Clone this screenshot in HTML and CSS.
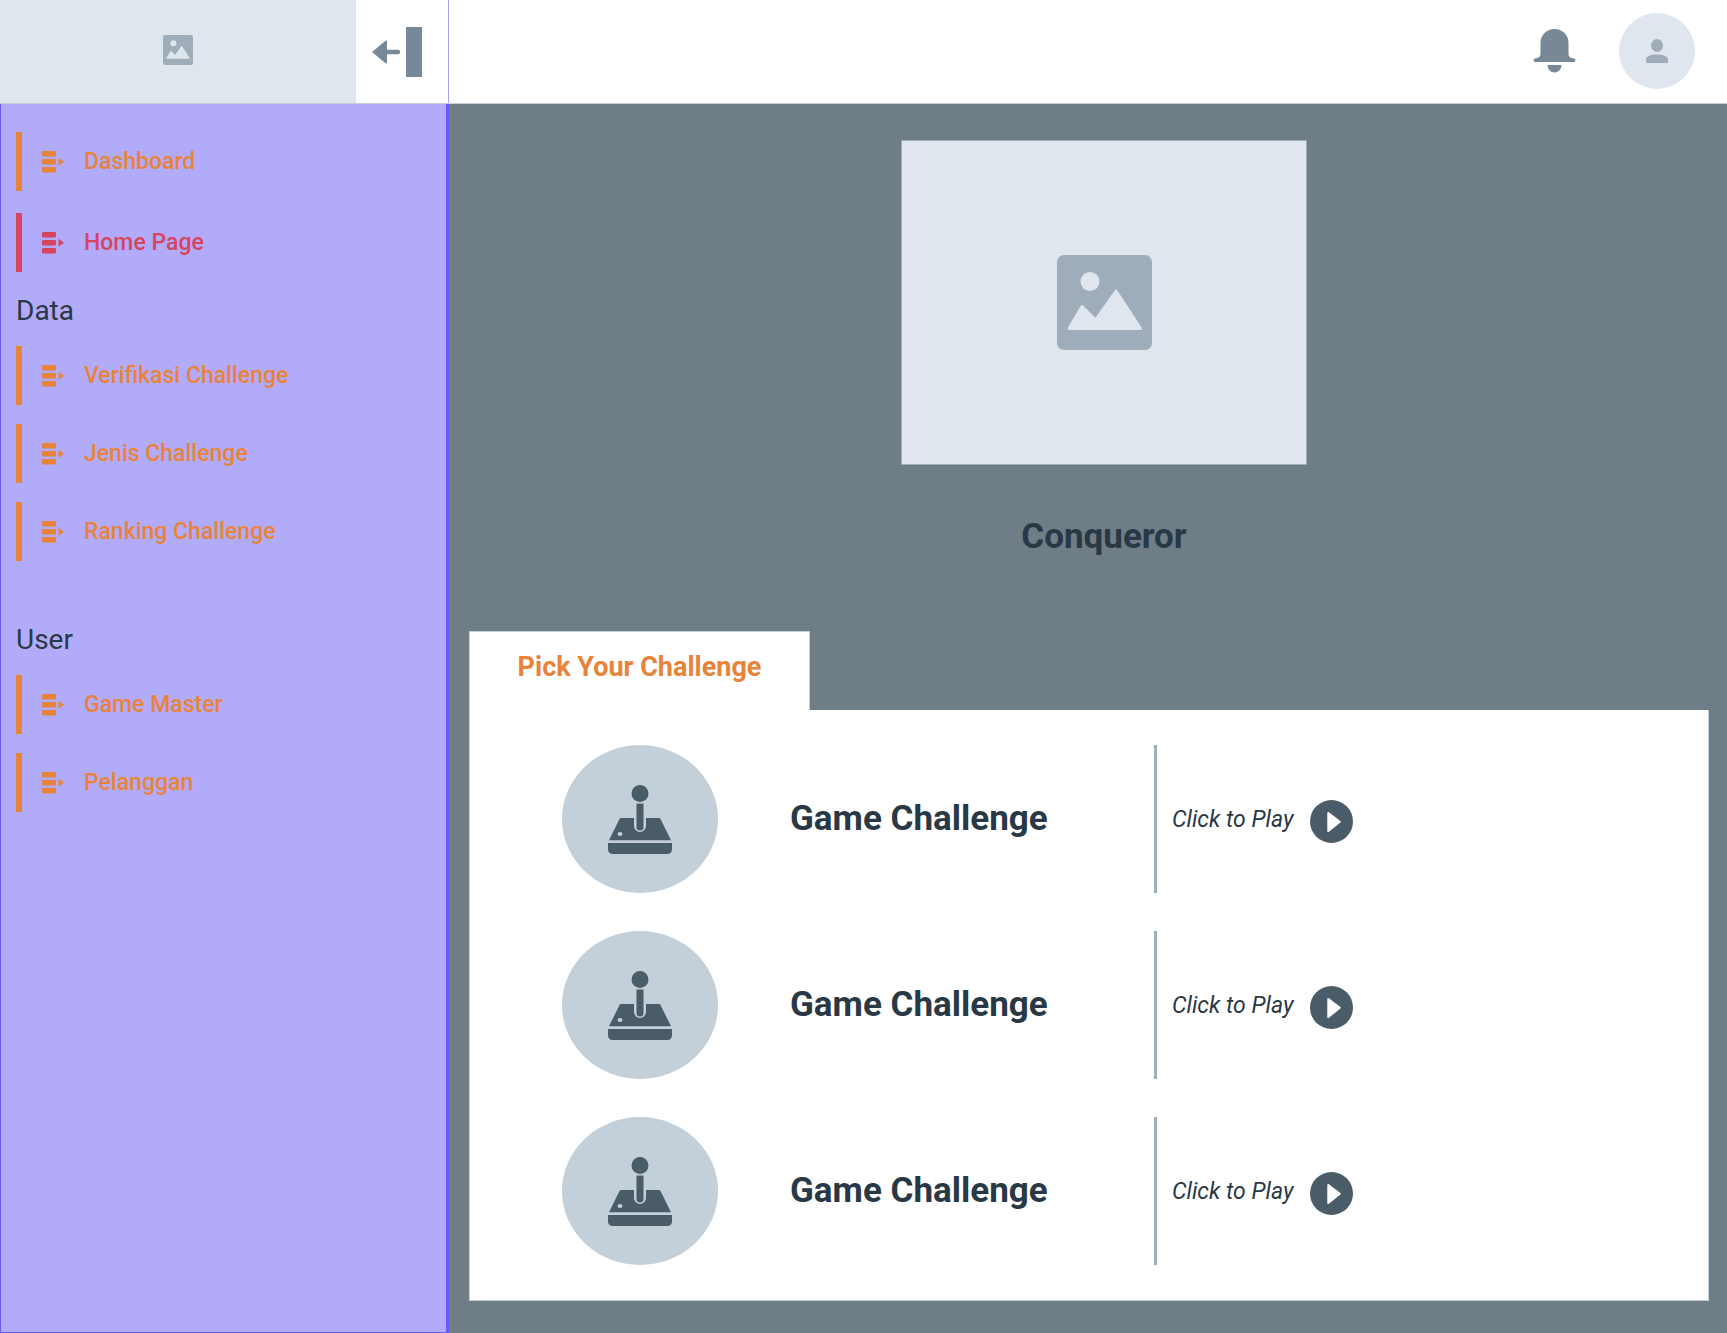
FILE: index.html
```html
<!DOCTYPE html>
<html lang="id">
<head>
<meta charset="utf-8">
<meta name="viewport" content="width=device-width, initial-scale=1">
<title>Conqueror</title>
<link rel="stylesheet" href="styles.css">
</head>
<body>
<svg class="sprite" aria-hidden="true">
  <symbol id="picture" viewBox="0 0 95 95">
    <rect width="95" height="95" rx="7" fill="#9eadb9"/>
    <circle cx="33" cy="26.500" r="9.500" fill="#dfe6ee"/>
    <path d="M12 73.500L25 51.500L38.600 65L59 36L83.500 73.500Z" fill="#dfe6ee" stroke="#dfe6ee" stroke-width="3" stroke-linejoin="round"/>
  </symbol>
  <symbol id="menu" viewBox="0 0 22 22">
    <rect width="14" height="5.500" rx="1.200"/>
    <rect y="8" width="14" height="5.500" rx="1.200"/>
    <rect y="16" width="14" height="5.500" rx="1.200"/>
    <path d="M16.500 6.800L22 10.800L16.500 14.800Z"/>
  </symbol>
  <symbol id="joystick" viewBox="0 0 64 69">
    <circle cx="32" cy="8.500" r="8.500"/>
    <path d="M28.500 18.500H35.500V42A3.500 3.500 0 0 1 28.500 42Z"/>
    <path fill-rule="evenodd" d="M13 33H26V41A6 6 0 0 0 38 41V33H51Q52 33 52.500 34L63 55.300H1L11.500 34Q12 33 13 33ZM9.500 49A2.500 2 0 1 0 14.500 49A2.500 2 0 1 0 9.500 49Z"/>
    <path d="M0 58H64V64.500A4.500 4.500 0 0 1 59.500 69H4.500A4.500 4.500 0 0 1 0 64.500Z"/>
  </symbol>
  <symbol id="play" viewBox="0 0 43 43">
    <circle cx="21.500" cy="21.500" r="21.500" fill="#4b5c69"/>
    <path d="M18.300 13L29.800 21.700L18.300 31Z" fill="#fff" stroke="#fff" stroke-width="2" stroke-linejoin="round"/>
  </symbol>
</svg>

<div class="page">
  <header class="topbar">
    <div class="brand">
      <a class="logo" href="#" aria-label="Logo"><svg class="logo-icon"><use href="#picture"/></svg></a>
      <button class="collapse" type="button" aria-label="Collapse menu">
        <svg class="collapse-icon" viewBox="0 0 50 50">
          <path d="M0 25L13.500 13.800Q15 13 15 14.800V22.800H26A2.200 2.200 0 0 1 26 27.200H15V35Q15 37 13.500 36.200Z"/>
          <rect x="34" width="16" height="50"/>
        </svg>
      </button>
    </div>
    <div class="account">
      <button class="bell" type="button" aria-label="Notifications">
        <svg class="bell-icon" viewBox="0 0 43 44">
          <path d="M7.500 14A14 14 0 0 1 35.500 14V24.500C35.500 28 37.500 29 41 29.500A1.800 1.800 0 0 1 41 33H2A1.800 1.800 0 0 1 2 29.500C5.500 29 7.500 28 7.500 24.500Z"/>
          <path d="M14.500 36H28.500A7 7.500 0 0 1 14.500 36Z"/>
        </svg>
      </button>
      <button class="avatar" type="button" aria-label="Profile">
        <svg class="avatar-icon" viewBox="0 0 22 24">
          <ellipse cx="11" cy="6.500" rx="6" ry="6.500"/>
          <path d="M0 24V20.500C0 17 5 15.500 11 15.500S22 17 22 20.500V24Z"/>
        </svg>
      </button>
    </div>
  </header>

  <nav class="sidebar">
    <ul class="menu menu-top">
      <li><a class="item" href="#"><svg class="item-icon"><use href="#menu"/></svg>Dashboard</a></li>
      <li><a class="item item-active" href="#" aria-current="page"><svg class="item-icon"><use href="#menu"/></svg>Home Page</a></li>
    </ul>
    <h2 class="group">Data</h2>
    <ul class="menu">
      <li><a class="item" href="#"><svg class="item-icon"><use href="#menu"/></svg>Verifikasi Challenge</a></li>
      <li><a class="item" href="#"><svg class="item-icon"><use href="#menu"/></svg>Jenis Challenge</a></li>
      <li><a class="item" href="#"><svg class="item-icon"><use href="#menu"/></svg>Ranking Challenge</a></li>
    </ul>
    <h2 class="group group-spaced">User</h2>
    <ul class="menu">
      <li><a class="item" href="#"><svg class="item-icon"><use href="#menu"/></svg>Game Master</a></li>
      <li><a class="item" href="#"><svg class="item-icon"><use href="#menu"/></svg>Pelanggan</a></li>
    </ul>
  </nav>

  <main class="content">
    <section class="hero">
      <div class="cover"><svg class="cover-icon"><use href="#picture"/></svg></div>
      <h1 class="title">Conqueror</h1>
    </section>
    <section class="challenges">
      <h2 class="tab">Pick Your Challenge</h2>
      <ul class="list">
        <li class="row">
          <span class="badge"><svg class="badge-icon"><use href="#joystick"/></svg></span>
          <h3 class="name">Game Challenge</h3>
          <div class="action"><button class="play" type="button">Click to Play<svg class="play-icon"><use href="#play"/></svg></button></div>
        </li>
        <li class="row">
          <span class="badge"><svg class="badge-icon"><use href="#joystick"/></svg></span>
          <h3 class="name">Game Challenge</h3>
          <div class="action"><button class="play" type="button">Click to Play<svg class="play-icon"><use href="#play"/></svg></button></div>
        </li>
        <li class="row">
          <span class="badge"><svg class="badge-icon"><use href="#joystick"/></svg></span>
          <h3 class="name">Game Challenge</h3>
          <div class="action"><button class="play" type="button">Click to Play<svg class="play-icon"><use href="#play"/></svg></button></div>
        </li>
      </ul>
    </section>
  </main>
</div>
</body>
</html>
```
FILE: styles.css
```css
* { box-sizing: border-box; }

body {
  margin: 0;
  color: #293845;
  font-family: Roboto, "Liberation Sans", sans-serif;
}

h1, h2, h3, ul { margin: 0; padding: 0; }
ul { list-style: none; }
a { text-decoration: none; }
svg { display: block; flex: none; }

button {
  padding: 0;
  border: 0;
  background: none;
  color: inherit;
  font: inherit;
  cursor: pointer;
}

.sprite { position: absolute; width: 0; height: 0; }

.page {
  display: grid;
  grid-template-columns: 449px 1fr;
  grid-template-rows: 104px 1fr;
  min-height: 100vh;
  background: #6f7d87;
}

/* Top bar */
.topbar {
  grid-column: 1 / -1;
  display: flex;
  justify-content: space-between;
  background: #fff;
  border-bottom: 1px solid #c3cfd9;
}

.brand {
  display: flex;
  width: 449px;
  border-right: 1px solid #a89ffb;
}

.logo {
  display: flex;
  flex: 1;
  align-items: center;
  justify-content: center;
  padding-bottom: 3px;
  background: #dfe6ee;
}

.logo-icon { width: 30px; height: 30px; }

.collapse {
  width: 92px;
  padding-left: 16px;
}

.collapse-icon { width: 50px; height: 50px; fill: #788896; }

.account {
  display: flex;
  align-items: center;
  gap: 43px;
  padding: 0 32px 2px 0;
}

.bell-icon { width: 43px; height: 44px; fill: #788896; }

.avatar {
  display: flex;
  align-items: center;
  justify-content: center;
  width: 76px;
  height: 76px;
  border-radius: 50%;
  background: #dfe6ee;
}

.avatar-icon { width: 22px; height: 24px; fill: #9eadb9; }

/* Sidebar */
.sidebar {
  padding: 28px 14px 28px 15px;
  background: #b2abfa;
  border: solid #6b5cf6;
  border-width: 0 3px 1px 1px;
}

.menu { display: grid; gap: 19px; }
.menu-top { gap: 22px; }

.item {
  display: flex;
  align-items: center;
  gap: 20px;
  height: 59px;
  padding-left: 20px;
  border-left: 6px solid #e8833a;
  color: #e8833a;
  font-size: 23px;
  font-weight: 500;
}

.item-active { border-color: #d64560; color: #d64560; }
.item-icon { width: 22px; height: 22px; fill: currentColor; }

.group {
  padding: 22px 0 18px;
  font-size: 28px;
  font-weight: 400;
  line-height: 34px;
}

.group-spaced { padding-top: 62px; }

/* Main */
.content {
  display: flex;
  flex-direction: column;
  padding: 36px 18px 32px 20px;
}

.hero {
  display: flex;
  flex-direction: column;
  align-items: center;
  padding-left: 30px;
}

.cover {
  display: flex;
  align-items: center;
  justify-content: center;
  width: 406px;
  max-width: 100%;
  height: 325px;
  background: #dfe6ee;
  border: 1px solid #9eadb9;
}

.cover-icon { width: 95px; height: 95px; }

.title {
  padding: 52px 0 74px;
  font-size: 35px;
  line-height: 40px;
}

.challenges {
  display: flex;
  flex: 1;
  flex-direction: column;
  align-items: flex-start;
}

.tab {
  width: 341px;
  height: 79px;
  padding-top: 17px;
  background: #fff;
  border: solid #c3cfd9;
  border-width: 1px 1px 0;
  color: #e8833a;
  font-size: 27px;
  line-height: 36px;
  text-align: center;
}

.list {
  display: grid;
  flex: 1;
  align-content: start;
  gap: 38px;
  width: 100%;
  padding: 35px 92px;
  background: #fff;
  border: solid #c3cfd9;
  border-width: 0 1px 1px;
}

.row {
  display: grid;
  grid-template-columns: 156px 364px 1fr;
  column-gap: 72px;
  align-items: center;
}

.badge {
  display: flex;
  align-items: center;
  justify-content: center;
  height: 148px;
  border-radius: 50%;
  background: #c3cfd9;
}

.badge-icon { width: 64px; height: 69px; fill: #4b5c69; }

.name { font-size: 35px; line-height: 40px; }

.action {
  display: flex;
  align-self: stretch;
  margin-left: -72px;
  padding-left: 15px;
  border-left: 3px solid #9eadb9;
}

.play {
  display: flex;
  align-items: center;
  gap: 17px;
  font-size: 23px;
  font-style: italic;
}

.play-icon { width: 43px; height: 43px; margin-top: 5px; }
```
